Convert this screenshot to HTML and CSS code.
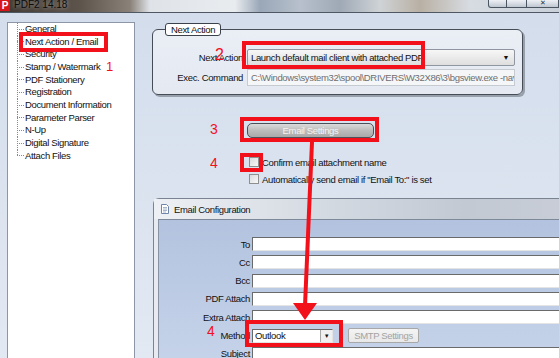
FILE: index.html
```html
<!DOCTYPE html>
<html lang="en">
<head>
    <meta charset="UTF-8">
    <title>PDF2 14.18</title>
    <link rel="stylesheet" href="styles.css">
</head>
<body>
    <div class="titlebar">
        <span class="app-icon">P</span>
        <span class="app-title">PDF2 14.18</span>
        <div class="win-btns">
            <span class="wb wb-min"></span>
            <span class="wb wb-max"></span>
            <span class="wb wb-close">✕</span>
        </div>
    </div>

    <div class="main">
        <!-- Settings tree -->
        <ul class="tree">
            <li>General</li>
            <li>Next Action / Email</li>
            <li>Security</li>
            <li>Stamp / Watermark</li>
            <li>PDF Stationery</li>
            <li>Registration</li>
            <li>Document Information</li>
            <li>Parameter Parser</li>
            <li>N-Up</li>
            <li>Digital Signature</li>
            <li>Attach Files</li>
        </ul>

        <div class="content">
            <fieldset class="group">
                <legend>Next Action</legend>
                <div class="row">
                    <label>Next Action</label>
                    <div class="combo">Launch default mail client with attached PDF<span class="caret">▼</span></div>
                </div>
                <div class="row">
                    <label>Exec. Command</label>
                    <div class="textbox">C:\Windows\system32\spool\DRIVERS\W32X86\3\bgsview.exe -nav="9</div>
                </div>
            </fieldset>

            <div class="mail-opts">
                <button class="settings-btn">Email Settings</button>
                <label class="check check-first"><span class="box"></span>Confirm email attachment name</label>
                <label class="check"><span class="box"></span>Automatically send email if "Email To:" is set</label>
            </div>

            <div class="config">
                <div class="config-title">
                    <svg class="doc-icon" width="8" height="10" viewBox="0 0 8 10">
                        <path d="M0.5 0.5h5l2 2v7h-7z" fill="#fff" stroke="#6f86a8"/>
                        <path d="M2 3.5h4M2 5h4M2 6.5h4M2 8h3" stroke="#8fa2c0" stroke-width="0.8"/>
                    </svg>
                    <span>Email Configuration</span>
                </div>
                <div class="config-body">
                    <div class="frow"><label>To</label><div class="field"></div></div>
                    <div class="frow"><label>Cc</label><div class="field"></div></div>
                    <div class="frow"><label>Bcc</label><div class="field"></div></div>
                    <div class="frow"><label>PDF Attach</label><div class="field"></div></div>
                    <div class="frow"><label>Extra Attach</label><div class="field"></div></div>
                    <div class="frow">
                        <label>Method</label>
                        <div class="method">Outlook<span class="drop">▼</span></div>
                        <button class="smtp-btn">SMTP Settings</button>
                    </div>
                    <div class="frow"><label>Subject</label><div class="field"></div></div>
                </div>
            </div>
        </div>
    </div>

    <!-- Red annotations drawn over the screenshot -->
    <div class="marks">
        <div class="mark mark-tree"></div>
        <div class="mark mark-action"></div>
        <div class="mark mark-settings"></div>
        <div class="mark mark-check"></div>
        <div class="mark mark-method"></div>
        <span class="num num-1">1</span>
        <span class="num num-2">2</span>
        <span class="num num-3">3</span>
        <span class="num num-4a">4</span>
        <span class="num num-4b">4</span>
        <svg class="arrow" width="559" height="358" viewBox="0 0 559 358">
            <line x1="312" y1="142" x2="305" y2="306" stroke="#f2101a" stroke-width="4"/>
            <polygon points="293,303 317,303 305,320" fill="#f2101a"/>
        </svg>
    </div>
</body>
</html>
```

FILE: styles.css
```css
/* General */
* {
    margin: 0;
    padding: 0;
    box-sizing: border-box;
}

html, body {
    width: 559px;
    height: 358px;
    overflow: hidden;
}

body {
    font-family: "Liberation Sans", Arial, sans-serif;
    font-size: 9.5px;
    letter-spacing: -0.35px;
    color: #111;
    position: relative;
    background: #d9e1ee;
}

/* Title bar (aero glass, cropped) */
.titlebar {
    height: 13px;
    display: flex;
    align-items: flex-start;
    overflow: hidden;
    background: linear-gradient(90deg, #3f3833 0, #5d544c 80px, #8a8179 130px, #dfe3e8 150px, #e9ecef 235px, #9aa7b8 260px, #b7c0cc 300px, #9fa9b6 340px, #cfd3d6 380px, #b9b0a4 420px, #d7dce2 470px, #c9d0da 559px);
    border-bottom: 1px solid #4f5762;
}

.app-icon {
    width: 10px;
    height: 11px;
    background: #d8141c;
    color: #fff;
    font-weight: bold;
    font-size: 10px;
    line-height: 11px;
    text-align: center;
    letter-spacing: 0;
}

.app-title {
    margin-left: 4px;
    font-size: 10px;
    line-height: 9px;
    letter-spacing: 0;
    color: #0c0c0c;
    text-shadow: 0 0 4px rgba(255, 255, 255, 0.6);
}

.win-btns {
    margin-left: auto;
    display: flex;
}

.wb {
    height: 8px;
    border: 1px solid #4b5461;
    border-top: none;
    background: linear-gradient(#eef1f5, #bfc7d2);
    font-size: 7px;
    line-height: 6px;
    text-align: center;
    color: #333;
    overflow: hidden;
}

.wb-min {
    width: 19px;
    border-radius: 0 0 0 3px;
}

.wb-max {
    width: 20px;
    border-left: none;
}

.wb-close {
    width: 32px;
    border-left: none;
}

/* Main area */
.main {
    display: flex;
    height: 345px;
    overflow: hidden;
    background: linear-gradient(#d3ddec, #e3e9f3);
}

/* Tree */
.tree {
    list-style: none;
    width: 128px;
    flex: none;
    margin: 9px 0 0 7px;
    background: #fff;
    border: 1px solid #8c96a6;
    border-bottom: none;
}

.tree li {
    line-height: 12.65px;
    padding-left: 17px;
    white-space: nowrap;
    background:
        repeating-linear-gradient(to bottom, #8a8a8a 0 1px, transparent 1px 2px) 9px 0 / 1px 100% no-repeat,
        repeating-linear-gradient(to right, #8a8a8a 0 1px, transparent 1px 2px) 9px 50% / 7px 1px no-repeat;
}

.tree li:last-child {
    background:
        repeating-linear-gradient(to bottom, #8a8a8a 0 1px, transparent 1px 2px) 9px 0 / 1px 50% no-repeat,
        repeating-linear-gradient(to right, #8a8a8a 0 1px, transparent 1px 2px) 9px 50% / 7px 1px no-repeat;
}

.content {
    flex: 1;
    min-width: 0;
}

/* Next Action group */
.group {
    width: 371px;
    margin: 10px 0 0 17px;
    padding: 13px 5px 8px 0;
    border: 1px solid #474d57;
    border-radius: 6px;
    background: linear-gradient(#eaeef5, #e4e9f2);
    box-shadow: 2px 2px 0 #98a0ab;
}

.group legend {
    margin-left: 12px;
    padding: 0 5px;
    line-height: 11px;
    border: 1px solid #3c424c;
    border-radius: 3px;
    background: #fff;
}

.row {
    display: flex;
    align-items: center;
}

.row + .row {
    margin-top: 3px;
}

.row label {
    width: 90px;
    margin-right: 4px;
    text-align: right;
}

.combo {
    width: 268px;
    height: 17px;
    display: flex;
    padding: 0 5px 0 3px;
    line-height: 15px;
    border: 1px solid #8f96a0;
    border-radius: 2px;
    background: linear-gradient(#f7f7f7, #dedede);
}

.caret {
    margin-left: auto;
    font-size: 7px;
}

.textbox {
    width: 268px;
    height: 17px;
    padding-left: 3px;
    line-height: 15px;
    white-space: nowrap;
    overflow: hidden;
    color: #6e6e6e;
    border: 1px solid #c6cad1;
    background: #f5f6f8;
}

/* Mail options */
.mail-opts {
    padding-left: 112px;
}

.settings-btn {
    display: block;
    width: 127px;
    height: 15px;
    margin-top: 28px;
    font: inherit;
    letter-spacing: -0.35px;
    color: #f4f4f4;
    border: 1px solid #4b5059;
    border-radius: 5px;
    background: linear-gradient(#dadada, #bcbcbc 50%, #a9a9a9);
}

.check {
    display: flex;
    align-items: center;
    height: 10px;
    margin-top: 7px;
    padding-left: 2px;
}

.check-first {
    margin-top: 19px;
}

.box {
    width: 10px;
    height: 10px;
    margin-right: 3px;
    border: 1px solid #8e8f8f;
    background: linear-gradient(135deg, #d9dbde, #f8f8f8);
}

/* Email configuration window */
.config {
    margin: 14px -40px 0 18px;
    border: 1px solid #7a8392;
    border-right: none;
    border-radius: 6px 0 0 0;
    background: #e7ebf1;
}

.config-title {
    height: 20px;
    display: flex;
    align-items: center;
    padding-left: 7px;
    background: linear-gradient(90deg, #edf0f4, #d3d9e1 40%, #c3c9d3 70%, #c9ced8);
}

.doc-icon {
    margin-right: 5px;
}

.config-body {
    margin-left: 4px;
    height: 160px;
    padding-top: 17px;
    display: flex;
    flex-direction: column;
    gap: 4.33px;
    border-left: 1px solid #8792a3;
    border-top: 1px solid #7d8899;
    background: linear-gradient(#b3c3df, #c8d5eb);
}

.frow {
    display: flex;
    align-items: center;
    height: 14px;
}

.frow label {
    width: 91px;
    margin-right: 2px;
    text-align: right;
}

.field {
    flex: 1;
    height: 14px;
    background: #fff;
    border: 1px solid;
    border-color: #6a6a6a #e4e4e4 #e4e4e4 #6a6a6a;
}

.method {
    width: 81px;
    height: 14px;
    display: flex;
    padding-left: 2px;
    line-height: 12px;
    background: #fff;
    border: 1px solid;
    border-color: #6a6a6a #e4e4e4 #e4e4e4 #6a6a6a;
}

.drop {
    width: 12px;
    margin-left: auto;
    font-size: 6px;
    text-align: center;
    border-left: 1px solid #a9a9a9;
    background: #f0f0f0;
}

.smtp-btn {
    width: 71px;
    height: 15px;
    margin-left: 15px;
    font: inherit;
    letter-spacing: -0.35px;
    color: #a3a3a3;
    border: 1px solid #a8a8a8;
    border-radius: 2px;
    background: linear-gradient(#f4f4f4, #e8e8e8);
}

/* Annotations */
.marks {
    position: absolute;
    top: 0;
    left: 0;
    width: 559px;
    height: 358px;
    pointer-events: none;
}

.mark {
    position: absolute;
    border: 4px solid #f2101a;
}

.mark-tree { left: 19px; top: 32px; width: 89px; height: 20px; }
.mark-action { left: 242px; top: 41px; width: 183px; height: 28px; }
.mark-settings { left: 240px; top: 117px; width: 139px; height: 25px; }
.mark-check { left: 240px; top: 153px; width: 23px; height: 19px; }
.mark-method { left: 245px; top: 320px; width: 98px; height: 27px; }

.num {
    position: absolute;
    color: #f2101a;
    font-size: 14px;
    line-height: 14px;
    letter-spacing: 0;
}

.num-1 { left: 106px; top: 60px; font-size: 13px; }
.num-2 { left: 215px; top: 48px; font-size: 16px; }
.num-3 { left: 210px; top: 122px; }
.num-4a { left: 210px; top: 156px; }
.num-4b { left: 207px; top: 324px; }

.arrow {
    position: absolute;
    top: 0;
    left: 0;
}
```
